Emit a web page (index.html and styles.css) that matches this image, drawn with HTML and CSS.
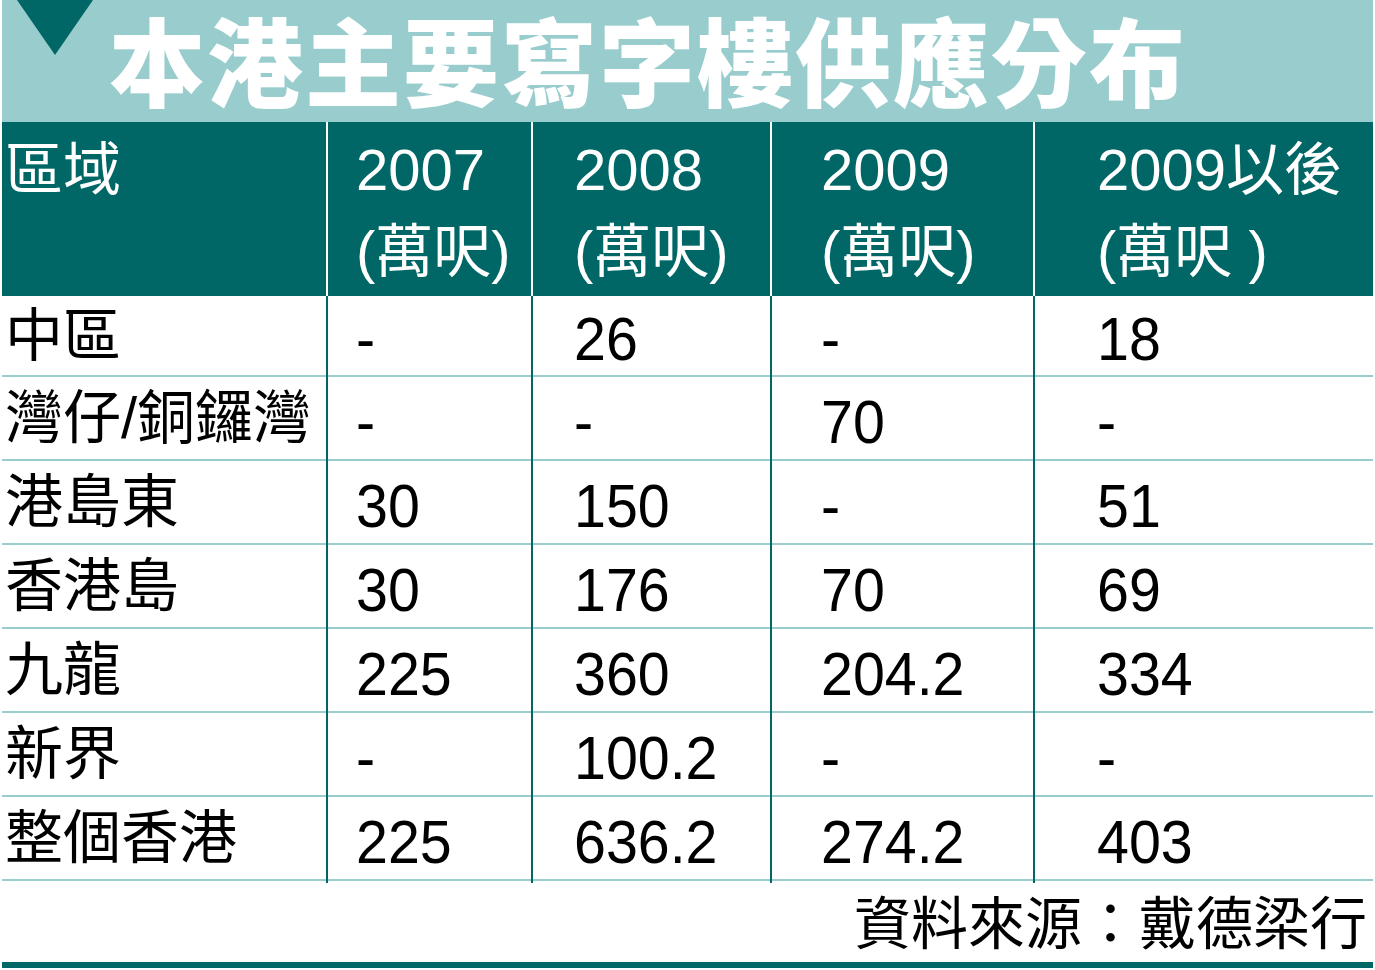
FILE: index.html
```html
<!DOCTYPE html>
<html lang="zh-Hant">
<head>
<meta charset="utf-8">
<title>本港主要寫字樓供應分布</title>
<link rel="stylesheet" href="styles.css">
</head>
<body>
<div class="chart">
  <div class="title-band">
    <span class="tri"></span>
    <h1 class="title">本港主要寫字樓供應分布</h1>
  </div>

  <div class="table">
    <div class="row head">
      <div class="cell c0">區域</div>
      <div class="cell c1">2007<br>(萬呎)</div>
      <div class="cell c2">2008<br>(萬呎)</div>
      <div class="cell c3">2009<br>(萬呎)</div>
      <div class="cell c4">2009以後<br>(萬呎 )</div>
    </div>

    <div class="row data first">
      <div class="cell c0">中區</div>
      <div class="cell c1 n"><span class="num">-</span></div>
      <div class="cell c2 n"><span class="num">26</span></div>
      <div class="cell c3 n"><span class="num">-</span></div>
      <div class="cell c4 n"><span class="num">18</span></div>
    </div>
    <div class="row data">
      <div class="cell c0">灣仔/銅鑼灣</div>
      <div class="cell c1 n"><span class="num">-</span></div>
      <div class="cell c2 n"><span class="num">-</span></div>
      <div class="cell c3 n"><span class="num">70</span></div>
      <div class="cell c4 n"><span class="num">-</span></div>
    </div>
    <div class="row data">
      <div class="cell c0">港島東</div>
      <div class="cell c1 n"><span class="num">30</span></div>
      <div class="cell c2 n"><span class="num">150</span></div>
      <div class="cell c3 n"><span class="num">-</span></div>
      <div class="cell c4 n"><span class="num">51</span></div>
    </div>
    <div class="row data">
      <div class="cell c0">香港島</div>
      <div class="cell c1 n"><span class="num">30</span></div>
      <div class="cell c2 n"><span class="num">176</span></div>
      <div class="cell c3 n"><span class="num">70</span></div>
      <div class="cell c4 n"><span class="num">69</span></div>
    </div>
    <div class="row data">
      <div class="cell c0">九龍</div>
      <div class="cell c1 n"><span class="num">225</span></div>
      <div class="cell c2 n"><span class="num">360</span></div>
      <div class="cell c3 n"><span class="num">204.2</span></div>
      <div class="cell c4 n"><span class="num">334</span></div>
    </div>
    <div class="row data">
      <div class="cell c0">新界</div>
      <div class="cell c1 n"><span class="num">-</span></div>
      <div class="cell c2 n"><span class="num">100.2</span></div>
      <div class="cell c3 n"><span class="num">-</span></div>
      <div class="cell c4 n"><span class="num">-</span></div>
    </div>
    <div class="row data">
      <div class="cell c0">整個香港</div>
      <div class="cell c1 n"><span class="num">225</span></div>
      <div class="cell c2 n"><span class="num">636.2</span></div>
      <div class="cell c3 n"><span class="num">274.2</span></div>
      <div class="cell c4 n"><span class="num">403</span></div>
    </div>
  </div>

  <div class="source">資料來源：戴德梁行</div>
  <div class="bottom-bar"></div>
</div>
</body>
</html>
```

FILE: styles.css
```css
html, body {
  margin: 0;
  padding: 0;
  background: #ffffff;
}

.chart {
  width: 1371px;
  margin-left: 2px;
  font-family: "Liberation Sans", "Noto Sans CJK TC", sans-serif;
  color: #000000;
}

/* ---------- title band ---------- */
.title-band {
  height: 122px;
  background: #99cccc;
  display: flex;
  align-items: flex-start;
}

.tri {
  width: 0;
  height: 0;
  margin-left: 15px;
  border-left: 38px solid transparent;
  border-right: 38px solid transparent;
  border-top: 55px solid #006666;
}

.title {
  margin: 0 0 0 16px;
  font-family: "Noto Sans CJK TC", "Noto Sans CJK SC", sans-serif;
  font-weight: 900;
  font-size: 96px;
  line-height: 116px;
  letter-spacing: 2px;
  color: #ffffff;
  white-space: nowrap;
}

/* ---------- table ---------- */
.table {
  display: flex;
  flex-direction: column;
}

.row {
  display: grid;
  grid-template-columns: 324px 205px 239px 263px 340px;
  box-sizing: border-box;
}

.row.head {
  height: 174px;
  background: #006666;
  color: #ffffff;
}

.row.data {
  height: 84px;
  border-bottom: 2px solid #99cccc;
}

.row.data.first {
  height: 81px;
}

.cell {
  box-sizing: border-box;
  white-space: nowrap;
}

.head .cell {
  font-size: 58px;
  line-height: 82px;
  padding-top: 7px;
}

.data .cell {
  font-size: 58px;
  line-height: 82px;
}

.data.first .cell {
  line-height: 79px;
}

.data .cell.n {
  font-size: 61px;
  padding-top: 4px;
}

.num {
  display: inline-block;
  transform: scaleX(0.94);
  transform-origin: left center;
}

.c0 { padding-left: 3px; }
.c1 { padding-left: 28px; }
.c2 { padding-left: 41px; }
.c3 { padding-left: 49px; }
.c4 { padding-left: 62px; }

.c1, .c2, .c3, .c4 {
  border-left: 2px solid #006666;
}

.head .c1, .head .c2, .head .c3, .head .c4 {
  border-left-color: #ffffff;
}

/* ---------- source + bottom bar ---------- */
.source {
  height: 81px;
  box-sizing: border-box;
  padding-top: 5px;
  padding-right: 6px;
  text-align: right;
  font-family: "Noto Sans CJK TC", sans-serif;
  font-size: 57px;
  line-height: 76px;
  white-space: nowrap;
}

.source {
  font-family: "Liberation Sans", "Noto Sans CJK TC", sans-serif;
}

.bottom-bar {
  height: 6px;
  background: #006666;
}
```
